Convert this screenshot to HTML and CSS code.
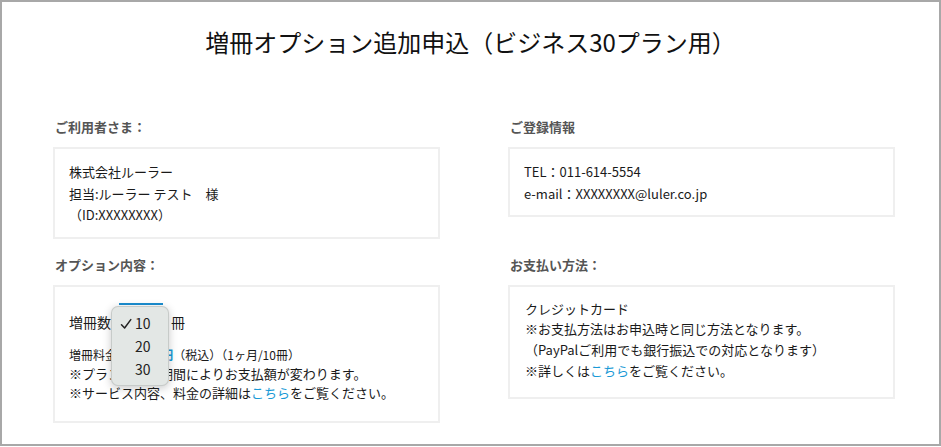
FILE: index.html
```html
<!DOCTYPE html>
<html lang="ja">
<head>
<meta charset="utf-8">
<title>増冊オプション追加申込</title>
<link rel="stylesheet" href="styles.css">
</head>
<body>
<div class="frame">
  <h1 class="title">増冊オプション追加申込（ビジネス30プラン用）</h1>
  <div class="grid">
    <section class="cell">
      <h2 class="label">ご利用者さま：</h2>
      <div class="box box-user">
        <p>株式会社ルーラー</p>
        <p>担当:ルーラー テスト　様</p>
        <p>（ID:XXXXXXXX）</p>
      </div>
    </section>
    <section class="cell">
      <h2 class="label">ご登録情報</h2>
      <div class="box box-user">
        <p>TEL：011-614-5554</p>
        <p>e-mail：XXXXXXXX@luler.co.jp</p>
      </div>
    </section>
    <section class="cell">
      <h2 class="label">オプション内容：</h2>
      <div class="box box-option">
        <div class="qty-row">
          <span>増冊数</span>
          <span class="select-wrap">
            <span class="select"></span>
            <span class="popup">
              <span class="item selected"><svg class="check" viewBox="0 0 12 12" width="12" height="12"><path d="M1.5 6.8 L4.6 10 L10.8 1.6" fill="none" stroke="#222" stroke-width="1.5" stroke-linecap="round" stroke-linejoin="round"/></svg>10</span>
              <span class="item">20</span>
              <span class="item">30</span>
            </span>
          </span>
          <span class="unit">冊</span>
        </div>
        <p class="small">増冊料金：<span class="price">3,300円</span>（税込）（1ヶ月/10冊）</p>
        <p>※プランの契約期間によりお支払額が変わります。</p>
        <p>※サービス内容、料金の詳細は<a class="link" href="#">こちら</a>をご覧ください。</p>
      </div>
    </section>
    <section class="cell">
      <h2 class="label">お支払い方法：</h2>
      <div class="box box-pay">
        <p>クレジットカード</p>
        <p>※お支払方法はお申込時と同じ方法となります。</p>
        <p>（PayPalご利用でも銀行振込での対応となります）</p>
        <p>※詳しくは<a class="link" href="#">こちら</a>をご覧ください。</p>
      </div>
    </section>
  </div>
</div>
</body>
</html>
```

FILE: styles.css
```css
* { box-sizing: border-box; }
html, body { margin: 0; padding: 0; background: #fff; }
body {
  font-family: "Noto Sans CJK JP", "Noto Sans", sans-serif;
  color: #1a1a1a;
}
.frame {
  width: 941px;
  height: 446px;
  border: 2px solid #a8a8a8;
  padding-top: 24px;
  overflow: hidden;
}
.title {
  margin: 0;
  text-align: center;
  font-size: 24px;
  font-weight: 400;
  line-height: 31px;
  color: #111;
}
.grid {
  margin: 60px 0 0 51px;
  display: grid;
  grid-template-columns: 387px 387px;
  column-gap: 68px;
  row-gap: 16px;
  align-items: start;
}
.label {
  margin: 0 0 0 2px;
  font-size: 13px;
  font-weight: 700;
  line-height: 20px;
  color: #555;
  height: 30px;
}
.box {
  border: 2px solid #efefef;
  font-size: 13px;
}
.box p { margin: 0; }
.box-user {
  padding: 12px 14px 11px;
  line-height: 21.5px;
}
.box-pay {
  padding: 12px 14px 16px 15px;
  line-height: 20.7px;
}
.box-option {
  padding: 16px 14px 19px;
  line-height: 19px;
}
.qty-row {
  display: flex;
  align-items: center;
  height: 40px;
  font-size: 14px;
  margin-bottom: 2px;
}
.select-wrap {
  position: relative;
  width: 44px;
  height: 40px;
  margin-left: 8px;
}
.select {
  display: block;
  width: 44px;
  height: 40px;
  border-top: 2px solid #1b8ed0;
  background: #fff;
}
.popup {
  position: absolute;
  left: -8px;
  top: 3px;
  width: 58px;
  height: 80px;
  padding-top: 5px;
  background: #e3e7e5;
  border: 1px solid rgba(0, 0, 0, 0.12);
  border-radius: 7px;
  box-shadow: 0 2px 8px rgba(0, 0, 0, 0.22);
  display: flex;
  flex-direction: column;
}
.item {
  position: relative;
  height: 23px;
  line-height: 23px;
  padding-left: 23px;
  font-size: 14px;
  color: #222;
}
.check {
  position: absolute;
  left: 8px;
  top: 6px;
}
.unit { margin-left: 8px; }
.small { font-size: 12px; }
.price { color: #1a9ad6; font-weight: 700; }
.link { color: #1a9ad6; text-decoration: none; }
```
